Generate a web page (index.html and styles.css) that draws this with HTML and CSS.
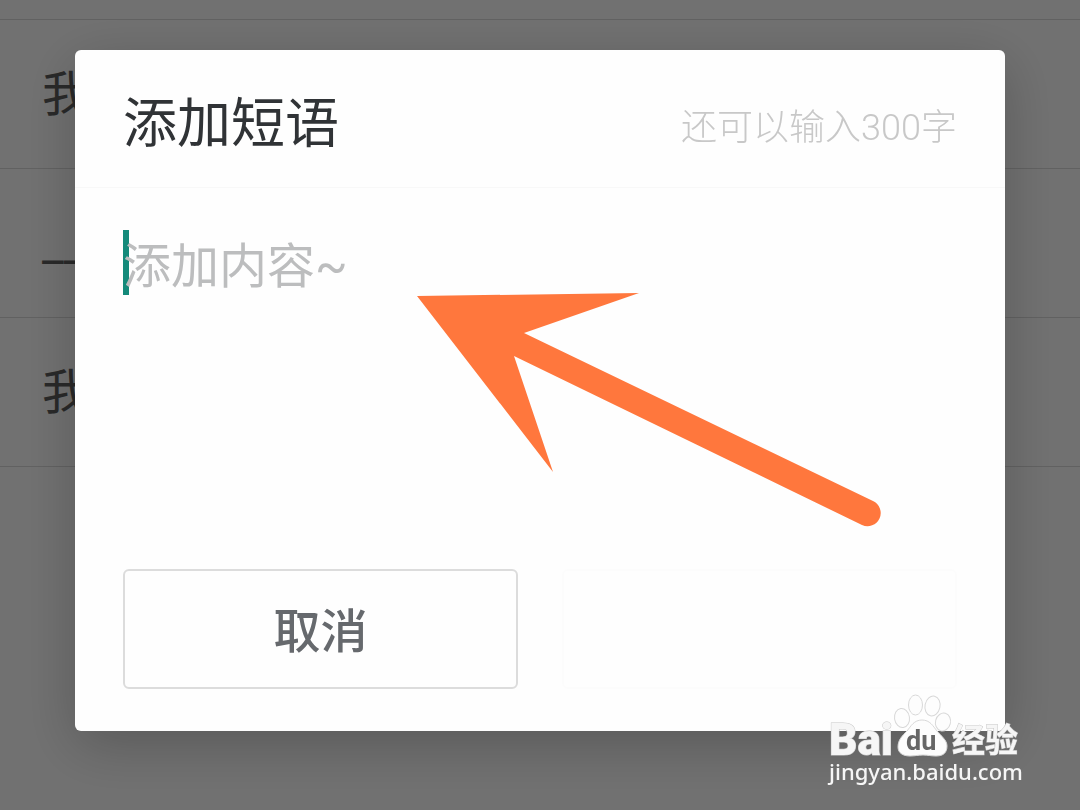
FILE: index.html
```html
<!DOCTYPE html>
<html lang="zh-CN">
<head>
    <meta charset="UTF-8">
    <meta name="viewport" content="width=device-width, initial-scale=1.0">
    <title>添加短语</title>
    <link rel="stylesheet" href="styles.css">
</head>
<body>
    <!-- 短语列表 -->
    <div class="topbar"></div>
    <ul class="phrases">
        <li>我</li>
        <li>__</li>
        <li>我</li>
    </ul>

    <!-- 弹窗 -->
    <div class="overlay">
        <form class="dialog">
            <div class="dialog-header">
                <label class="dialog-title" for="phrase">添加短语</label>
                <span class="remain">还可以输入300字</span>
            </div>
            <div class="dialog-body">
                <div class="field">
                    <span class="caret"></span>
                    <textarea id="phrase" maxlength="300" placeholder="添加内容~"></textarea>
                </div>
                <div class="actions">
                    <button type="button" class="btn">取消</button>
                    <button type="submit" class="btn btn-blank" disabled></button>
                </div>
            </div>
            <svg class="arrow" width="464" height="236" viewBox="0 0 464 236">
                <path d="M0 4L222 1L107 41L456 209A12 12 0 0 1 445 233L97 64L136 180Z"/>
            </svg>
        </form>
    </div>

    <!-- 水印 -->
    <svg class="watermark" width="200" height="96" viewBox="0 0 200 96">
        <g class="paw">
            <ellipse cx="75" cy="26" rx="7.5" ry="9.5" transform="rotate(-8 75 26)"/>
            <ellipse cx="88.5" cy="13" rx="7" ry="10"/>
            <ellipse cx="105.5" cy="14" rx="7.5" ry="10" transform="rotate(12 105.5 14)"/>
            <ellipse cx="116" cy="30" rx="7.5" ry="9" transform="rotate(15 116 30)"/>
            <path d="M95 28C87 28 84 34 80 39C75 44 71 48 71 55C71 61 76 64 83 64C88 64 91 63 96 63C101 63 104 64 109 64C116 64 120 61 120 54C120 48 114 44 110 39C106 34 103 28 95 28Z"/>
        </g>
        <text class="logo" x="2" y="63">Bai</text>
        <text class="logo-du" x="79" y="58">du</text>
        <text class="logo-cn" x="125" y="60">经验</text>
        <text class="site" x="2" y="88">jingyan.baidu.com</text>
    </svg>
</body>
</html>
```
FILE: styles.css
```css
* {
    box-sizing: border-box;
}
body {
    margin: 0;
    min-height: 100vh;
    background-color: #fafafa;
    font-family: Roboto, "Noto Sans CJK SC", sans-serif;
    font-size: 48px;
    color: #303336;
}
.topbar {
    height: 20px;
    border-bottom: 1px solid #d8d8d8;
}
.phrases {
    list-style: none;
    margin: 0;
    padding: 0;
    color: #5c5c5c;
}
.phrases li {
    height: 149px;
    line-height: 150px;
    padding-left: 42px;
    border-bottom: 1px solid #d8d8d8;
}
.overlay {
    position: fixed;
    inset: 0;
    padding: 50px 75px;
    background-color: rgba(0, 0, 0, 0.55);
}
.dialog {
    position: relative;
    background-color: #fefefe;
    border-radius: 6px;
    box-shadow: 0 14px 56px rgba(0, 0, 0, 0.22);
}
.dialog-header {
    display: flex;
    justify-content: space-between;
    align-items: center;
    height: 138px;
    padding: 2px 48px 0;
    border-bottom: 1px solid #f8f8f8;
}
.dialog-title {
    font-size: 54px;
}
.remain {
    padding-top: 8px;
    font-size: 36px;
    font-weight: 300;
    color: #c8c8c8;
}
.dialog-body {
    padding: 42px 48px;
}
.field {
    position: relative;
    height: 300px;
}
.caret {
    position: absolute;
    top: 0;
    left: 0;
    width: 6px;
    height: 65px;
    background-color: #148a7a;
}
textarea {
    position: relative;
    display: block;
    width: 100%;
    height: 100%;
    padding: 0;
    border: none;
    outline: none;
    resize: none;
    background: transparent;
    font-family: inherit;
    font-size: 48px;
    line-height: 74px;
    color: #303336;
}
textarea::placeholder {
    color: #bcbdbe;
}
.actions {
    display: flex;
    gap: 44px;
    margin-top: 39px;
}
.btn {
    flex: 1;
    height: 120px;
    padding: 0 0 4px;
    border: 2px solid #dcdcdc;
    border-radius: 6px;
    background-color: #fefefe;
    font-family: inherit;
    font-size: 47px;
    font-weight: 500;
    color: #66696d;
}
.btn-blank {
    border-color: #fcfcfc;
}
.arrow {
    position: absolute;
    top: 242px;
    left: 342px;
    fill: #ff773d;
    pointer-events: none;
}
.watermark {
    position: fixed;
    right: 53px;
    bottom: 22px;
}
.paw {
    fill: #fdfdfd;
    stroke: #d8d8d8;
    stroke-width: 1;
}
.logo, .logo-cn, .site {
    fill: #f6f6f6;
    stroke: #c8c8c8;
    stroke-width: 1;
    paint-order: stroke;
}
.logo {
    font-size: 44px;
    font-weight: 900;
}
.logo-du {
    font-size: 27px;
    font-weight: 700;
    fill: #666;
}
.logo-cn {
    font-size: 33px;
    font-weight: 700;
}
.site {
    font-family: "Noto Sans", sans-serif;
    font-size: 22px;
    font-weight: 500;
    stroke: none;
}
```
